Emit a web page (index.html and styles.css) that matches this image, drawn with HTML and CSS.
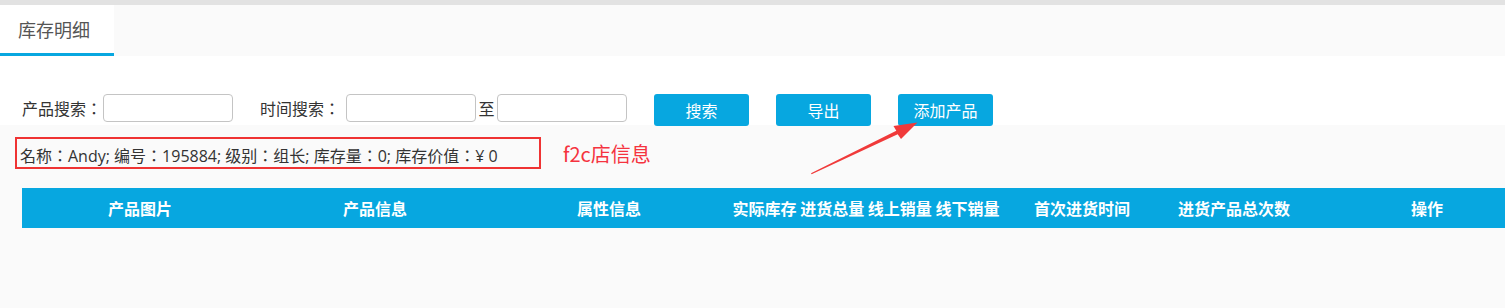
FILE: index.html
```html
<!DOCTYPE html>
<html lang="zh-CN">
<head>
  <meta charset="UTF-8">
  <title>库存明细</title>
  <link rel="stylesheet" href="styles.css">
</head>
<body>
  <div class="topbar"></div>
  <div class="tabs">
    <div class="tab active">库存明细</div>
  </div>

  <div class="page">
    <div class="search">
      <label class="lbl">产品搜索：</label>
      <input type="text" class="ipt">
      <label class="lbl gap">时间搜索：</label>
      <input type="text" class="ipt">
      <span class="to">至</span>
      <input type="text" class="ipt">
      <button class="btn gap">搜索</button>
      <button class="btn gap">导出</button>
      <button class="btn gap">添加产品</button>
    </div>

    <div class="info-row">
      <div class="info-box">名称：Andy; 编号：195884; 级别：组长; 库存量：0; 库存价值：¥ 0</div>
      <span class="note">f2c店信息</span>
    </div>

    <!-- 标注箭头 -->
    <svg class="arrow" width="130" height="70" viewBox="805 115 130 70">
      <polygon points="811,173.3 896.3,130.8 893.5,126 917.5,122.5 901,139 897.7,134.2 811.6,174.2" fill="#f03a3a"/>
    </svg>

    <div class="thead">
      <div>产品图片</div>
      <div>产品信息</div>
      <div>属性信息</div>
      <div>实际库存 进货总量 线上销量 线下销量</div>
      <div>首次进货时间</div>
      <div>进货产品总次数</div>
      <div>操作</div>
    </div>
  </div>
</body>
</html>
```

FILE: styles.css
```css
body {
  margin: 0;
  background: #fafafa;
  font-family: "Microsoft YaHei", "Noto Sans CJK SC", sans-serif;
  color: #333;
  overflow: hidden;
}

.topbar {
  height: 5px;
  background: #e2e2e2;
}

.tabs {
  display: flex;
  height: 51px;
  background: #fafafa;
}

.tab {
  width: 114px;
  box-sizing: border-box;
  padding-left: 18px;
  line-height: 48px;
  font-size: 18px;
  color: #555;
}

.tab.active {
  background: #fff;
  border-bottom: 3px solid #07a7e0;
}

.page {
  position: relative;
}

.search {
  display: flex;
  align-items: flex-start;
  height: 69px;
  box-sizing: border-box;
  padding: 38px 0 0 22px;
  background: #fff;
}

/* 冒号居中：繁体字形，关掉 locl */
.lbl {
  font-family: "Noto Sans CJK TC", sans-serif;
  font-feature-settings: "locl" 0;
  font-size: 16px;
  line-height: 28px;
  width: 81px;
  white-space: nowrap;
}

.lbl.gap {
  margin-left: 27px;
  width: 86px;
}

.ipt {
  width: 130px;
  height: 28px;
  box-sizing: border-box;
  margin: 0;
  border: 1px solid #c4c4c4;
  border-radius: 4px;
  background: #fff;
}

.to {
  width: 21px;
  font-size: 16px;
  line-height: 28px;
  text-align: center;
}

.btn {
  width: 95px;
  height: 32px;
  margin: 0;
  padding: 0;
  border: none;
  border-radius: 3px;
  background: #07a7e0;
  color: #fff;
  font-family: inherit;
  font-size: 16px;
}

.btn.gap {
  margin-left: 27px;
}

.info-row {
  display: flex;
  align-items: center;
  margin: 12px 0 0 15px;
}

.info-box {
  width: 526px;
  height: 32px;
  box-sizing: border-box;
  padding: 7px 0 0 3px;
  border: 2px solid #ef3333;
  font-family: "Open Sans", "Noto Sans CJK TC", sans-serif;
  font-feature-settings: "locl" 0;
  font-size: 16px;
  line-height: 20px;
  white-space: nowrap;
}

.note {
  margin-left: 22px;
  font-size: 20px;
  color: #f5333f;
}

.arrow {
  position: absolute;
  left: 805px;
  top: 59px;
}

.thead {
  display: grid;
  grid-template-columns: 236px 234px 234px 280px 152px 152px 234px;
  width: 1522px;
  height: 40px;
  margin: 19px 0 0 22px;
  background: #07a7e0;
  color: #fff;
  font-size: 16px;
  font-weight: bold;
  line-height: 40px;
  text-align: center;
  white-space: nowrap;
}
```
